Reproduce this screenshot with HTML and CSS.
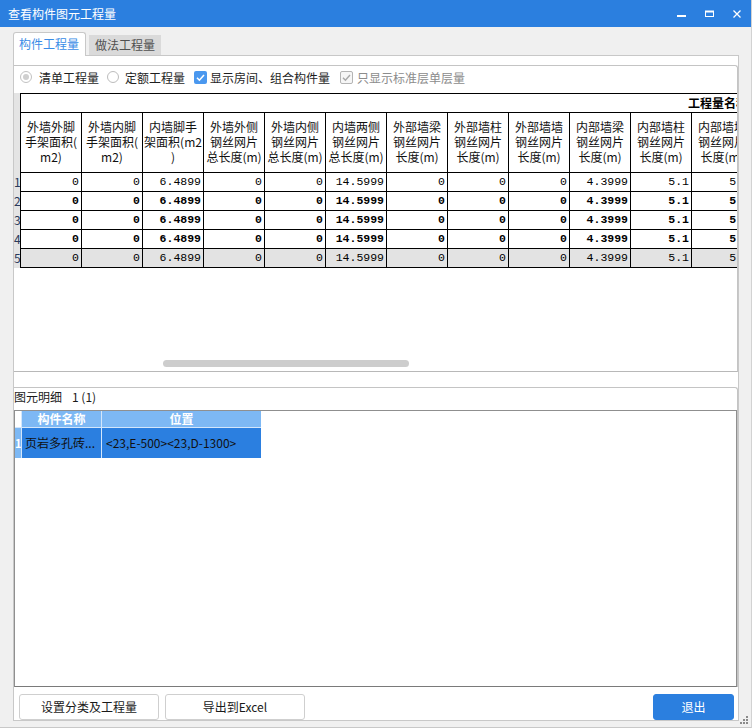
FILE: index.html
```html
<!DOCTYPE html>
<html lang="zh-CN">
<head>
<meta charset="utf-8">
<title>查看构件图元工程量</title>
<link rel="stylesheet" href="styles.css">
</head>
<body>
<div class="window">
  <div class="titlebar">
    <span class="title">查看构件图元工程量</span>
    <div class="controls">
      <svg class="ctl" width="28" height="27" viewBox="0 0 28 27"><rect x="10" y="15" width="9" height="2" fill="#fff"/></svg>
      <svg class="ctl" width="28" height="27" viewBox="0 0 28 27"><rect x="10.5" y="11.5" width="8" height="5" fill="none" stroke="#fff" stroke-width="1"/><rect x="10" y="10.5" width="9" height="2" fill="#fff"/></svg>
      <svg class="ctl" width="28" height="27" viewBox="0 0 28 27"><path d="M10.5 10.5 L17.5 17.5 M17.5 10.5 L10.5 17.5" stroke="#fff" stroke-width="1.3" fill="none"/></svg>
    </div>
  </div>
  <div class="main">
    <div class="tabs">
      <div class="tab active">构件工程量</div>
      <div class="tab inactive">做法工程量</div>
    </div>
    <div class="panel">
      <div class="group upper">
        <div class="options">
          <span class="radio checked-disabled"><span class="dot"></span></span>
          <span class="opt-label l1">清单工程量</span>
          <span class="radio r2"></span>
          <span class="opt-label l2">定额工程量</span>
          <span class="check on"><svg width="13" height="13" viewBox="0 0 13 13"><path d="M3 6.8 L5.4 9.2 L10 4" stroke="#fff" stroke-width="1.6" fill="none"/></svg></span>
          <span class="opt-label l3">显示房间、组合构件量</span>
          <span class="check disabled"><svg width="13" height="13" viewBox="0 0 13 13"><path d="M3 6.8 L5.4 9.2 L10 4" stroke="#a8a8a8" stroke-width="1.4" fill="none"/></svg></span>
          <span class="opt-label l4 muted">只显示标准层单层量</span>
        </div>
        <div class="gridarea">
          <div class="grid">
            <div class="rh"></div>
            <div class="grouphead">工程量名称</div>

            <div class="rh"></div>
            <div class="c hd">外墙外脚<br>手架面积(<br>m2)</div>
            <div class="c hd">外墙内脚<br>手架面积(<br>m2)</div>
            <div class="c hd">内墙脚手<br>架面积(m2<br>)</div>
            <div class="c hd">外墙外侧<br>钢丝网片<br>总长度(m)</div>
            <div class="c hd">外墙内侧<br>钢丝网片<br>总长度(m)</div>
            <div class="c hd">内墙两侧<br>钢丝网片<br>总长度(m)</div>
            <div class="c hd">外部墙梁<br>钢丝网片<br>长度(m)</div>
            <div class="c hd">外部墙柱<br>钢丝网片<br>长度(m)</div>
            <div class="c hd">外部墙墙<br>钢丝网片<br>长度(m)</div>
            <div class="c hd">内部墙梁<br>钢丝网片<br>长度(m)</div>
            <div class="c hd">内部墙柱<br>钢丝网片<br>长度(m)</div>
            <div class="c hd">内部墙墙<br>钢丝网片<br>长度(m)</div>

            <div class="rh num">1</div>
            <div class="c v">0</div><div class="c v">0</div><div class="c v">6.4899</div><div class="c v">0</div><div class="c v">0</div><div class="c v">14.5999</div><div class="c v">0</div><div class="c v">0</div><div class="c v">0</div><div class="c v">4.3999</div><div class="c v">5.1</div><div class="c v">5.1</div>

            <div class="rh num">2</div>
            <div class="c v b">0</div><div class="c v b">0</div><div class="c v b">6.4899</div><div class="c v b">0</div><div class="c v b">0</div><div class="c v b">14.5999</div><div class="c v b">0</div><div class="c v b">0</div><div class="c v b">0</div><div class="c v b">4.3999</div><div class="c v b">5.1</div><div class="c v b">5.1</div>

            <div class="rh num">3</div>
            <div class="c v b">0</div><div class="c v b">0</div><div class="c v b">6.4899</div><div class="c v b">0</div><div class="c v b">0</div><div class="c v b">14.5999</div><div class="c v b">0</div><div class="c v b">0</div><div class="c v b">0</div><div class="c v b">4.3999</div><div class="c v b">5.1</div><div class="c v b">5.1</div>

            <div class="rh num">4</div>
            <div class="c v b">0</div><div class="c v b">0</div><div class="c v b">6.4899</div><div class="c v b">0</div><div class="c v b">0</div><div class="c v b">14.5999</div><div class="c v b">0</div><div class="c v b">0</div><div class="c v b">0</div><div class="c v b">4.3999</div><div class="c v b">5.1</div><div class="c v b">5.1</div>

            <div class="rh num">5</div>
            <div class="c v g">0</div><div class="c v g">0</div><div class="c v g">6.4899</div><div class="c v g">0</div><div class="c v g">0</div><div class="c v g">14.5999</div><div class="c v g">0</div><div class="c v g">0</div><div class="c v g">0</div><div class="c v g">4.3999</div><div class="c v g">5.1</div><div class="c v g">5.1</div>
          </div>
          <div class="hscroll"><div class="thumb"></div></div>
        </div>
      </div>

      <div class="group lower">
        <div class="detail-label">图元明细<span class="count">1 (1)</span></div>
        <div class="detail-box">
          <div class="dgrid">
            <div class="drh-head"></div>
            <div class="dhead">构件名称</div>
            <div class="dhead">位置</div>
            <div class="drh">1</div>
            <div class="dcell">页岩多孔砖...</div>
            <div class="dcell pos">&lt;23,E-500&gt;&lt;23,D-1300&gt;</div>
          </div>
        </div>
      </div>

      <div class="buttons">
        <div class="btn">设置分类及工程量</div>
        <div class="btn second">导出到Excel</div>
        <div class="btn primary">退出</div>
      </div>
    </div>
  </div>
  <svg class="grip" width="9" height="9" viewBox="0 0 9 9">
    <rect x="6" y="0" width="2" height="2" fill="#8a8a8a"/>
    <rect x="3" y="3" width="2" height="2" fill="#8a8a8a"/>
    <rect x="6" y="3" width="2" height="2" fill="#8a8a8a"/>
    <rect x="0" y="6" width="2" height="2" fill="#8a8a8a"/>
    <rect x="3" y="6" width="2" height="2" fill="#8a8a8a"/>
    <rect x="6" y="6" width="2" height="2" fill="#8a8a8a"/>
  </svg>
</div>
</body>
</html>
```

FILE: styles.css
```css
* { box-sizing: border-box; margin: 0; padding: 0; }
html, body { width: 752px; height: 728px; overflow: hidden; }
body {
  font-family: "Noto Sans CJK SC", "Noto Sans", sans-serif;
  font-size: 12px;
  color: #1a1a1a;
  background: #f0f0f0;
}
.window {
  position: relative;
  width: 752px;
  height: 728px;
  display: flex;
  flex-direction: column;
  border-right: 1px solid #d2d2d2;
  border-bottom: 1px solid #c8c8c8;
}
.titlebar {
  flex: none;
  height: 27px;
  background: #2b7fdf;
  display: flex;
  align-items: center;
  color: #fff;
}
.title { flex: 1; padding-left: 8px; line-height: 27px; font-size: 12px; }
.controls { display: flex; height: 27px; }
.ctl { display: block; }

.main { flex: 1; padding: 5px 0 0 13px; display: flex; flex-direction: column; }
.tabs { height: 23px; display: flex; align-items: flex-end; }
.tab { font-size: 12px; white-space: nowrap; }
.tab.active {
  position: relative;
  z-index: 1;
  width: 73px;
  height: 24px;
  margin-bottom: -1px;
  border: 1px solid #c8c8c8;
  border-bottom: none;
  border-radius: 3px 3px 0 0;
  background: #fff;
  color: #3a8ce6;
  padding-left: 5px;
  line-height: 22px;
}
.tab.inactive {
  width: 72px;
  height: 20px;
  margin-left: 3px;
  background: #dadada;
  color: #505050;
  padding-left: 6px;
  line-height: 20px;
}

.panel {
  width: 726px;
  height: 666px;
  border: 1px solid #c8c8c8;
  background: #fff;
  padding-top: 9px;
  display: flex;
  flex-direction: column;
}
.group {
  width: 724px;
  border-top: 1px solid #c4c4c4;
  border-right: 1px solid #c4c4c4;
  border-top-right-radius: 3px;
}
.group.upper { height: 307px; border-bottom: 1px solid #b8b8b8; flex: none; }
.group.lower { height: 300px; margin-top: 15px; flex: none; }

.options {
  height: 22px;
  display: flex;
  align-items: center;
  padding-left: 6px;
  white-space: nowrap;
}
.radio {
  width: 12px;
  height: 12px;
  border-radius: 50%;
  border: 1px solid #c2c2c2;
  background: #fff;
  display: flex;
  align-items: center;
  justify-content: center;
  flex: none;
}
.radio .dot { width: 6px; height: 6px; border-radius: 50%; background: #cfcfcf; }
.radio.r2 { margin-left: 8px; border-color: #bcbcbc; }
.opt-label { color: #1e1e1e; }
.l1 { margin-left: 7px; }
.l2 { margin-left: 6px; }
.l3 { margin-left: 3px; }
.l4 { margin-left: 4px; }
.muted { color: #8c8c8c; }
.check {
  width: 13px;
  height: 13px;
  border-radius: 2px;
  flex: none;
  display: block;
}
.check svg { display: block; }
.check.on { margin-left: 9px; background: #4a98ef; }
.check.disabled { margin-left: 10px; border: 1px solid #b4b4b4; background: #f6f6f6; }
.check.disabled svg { margin: -1px 0 0 -1px; }

.gridarea {
  height: 283px;
  padding-top: 5px;
  overflow: hidden;
  display: flex;
  flex-direction: column;
}
.grid {
  display: grid;
  grid-template-columns: 7px repeat(12, 61px);
  grid-template-rows: 20px 60px repeat(5, 19px);
  width: 739px;
  flex: none;
}
.rh {
  background: #e4e4e4;
  border-right: 1px solid #000;
  overflow: hidden;
}
.rh.num {
  font-size: 12px;
  line-height: 18px;
  padding-left: 0;
  color: #2a3a5a;
}
.grouphead {
  grid-column: 2 / span 12;
  border-top: 1px solid #000;
  border-bottom: 1px solid #000;
  padding-left: 667px;
  font-weight: bold;
  line-height: 18px;
  white-space: nowrap;
  overflow: hidden;
  color: #000;
}
.c {
  border-right: 1px solid #000;
  border-bottom: 1px solid #000;
  background: #fff;
  overflow: hidden;
  white-space: nowrap;
}
.hd {
  display: flex;
  align-items: center;
  justify-content: center;
  text-align: center;
  line-height: 15px;
  color: #111;
  padding-bottom: 2px;
}
.v {
  text-align: right;
  padding-right: 2px;
  font-family: "Liberation Mono", "DejaVu Sans Mono", monospace;
  font-size: 11.5px;
  line-height: 18px;
  color: #000;
}
.v.b { font-weight: bold; }
.v.g { background: #e3e3e3; }

.hscroll { margin-top: auto; height: 11px; padding-left: 149px; flex: none; }
.thumb { width: 246px; height: 7px; border-radius: 4px; background: #cdcdcd; }

.detail-label { height: 22px; line-height: 18px; color: #1a1a1a; white-space: nowrap; }
.detail-label .count { margin-left: 10px; }
.detail-box {
  height: 277px;
  border: 1px solid #8f8f8f;
  border-bottom-color: #7a7a7a;
  background: #fff;
}
.dgrid {
  display: grid;
  grid-template-columns: 6px 79px 159px;
  grid-template-rows: 16px 30px;
  column-gap: 1px;
  row-gap: 1px;
  width: fit-content;
  background: #d3e6fb;
}
.drh-head { background: #fff; }
.dhead {
  background: #7db8f4;
  color: #fff;
  font-weight: bold;
  text-align: center;
  line-height: 16px;
}
.drh {
  background: #7db8f4;
  color: #fff;
  font-weight: bold;
  font-size: 11px;
  line-height: 30px;
  overflow: hidden;
  padding-left: 0;
}
.dcell {
  background: #2b7fe0;
  color: #111;
  line-height: 30px;
  padding-left: 3px;
  white-space: nowrap;
  overflow: hidden;
}
.dcell.pos { padding-left: 4px; }

.buttons {
  margin-top: 7px;
  height: 26px;
  display: flex;
  padding: 0 4px 0 5px;
  flex: none;
}
.btn {
  width: 140px;
  height: 26px;
  border: 1px solid #cfcfcf;
  border-radius: 3px;
  background: #fff;
  text-align: center;
  line-height: 24px;
  color: #1a1a1a;
}
.btn.second { margin-left: 6px; }
.btn.primary {
  margin-left: auto;
  width: 81px;
  background: #2b7fdf;
  border-color: #2b7fdf;
  color: #fff;
}
.grip { position: absolute; left: 740px; top: 716px; display: block; }
```
